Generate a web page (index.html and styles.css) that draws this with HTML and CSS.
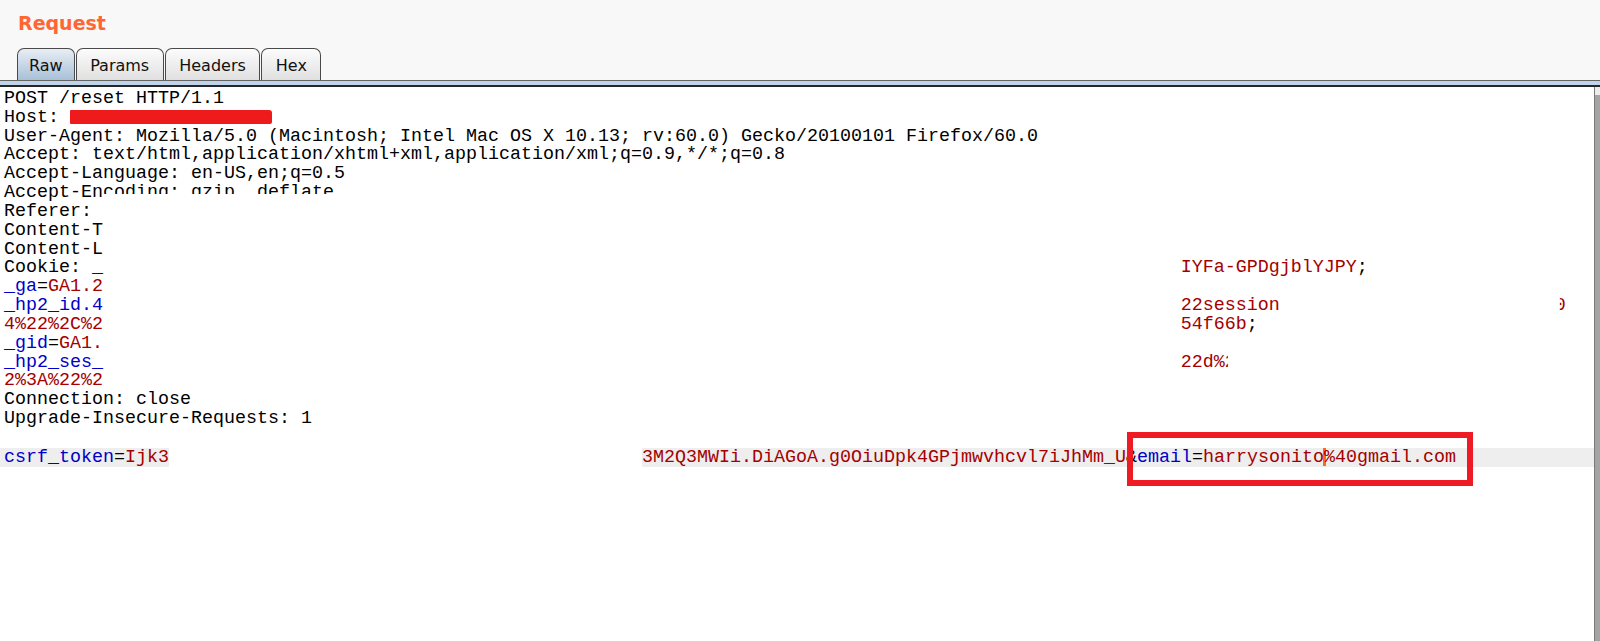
FILE: index.html
```html
<!DOCTYPE html>
<html lang="en">
<head>
<meta charset="utf-8">
<title>Request</title>
<link rel="stylesheet" href="styles.css">
</head>
<body>
<div class="top">
  <h1 class="title">Request</h1>
  <div class="tabs">
    <div class="tab active">Raw</div>
    <div class="tab">Params</div>
    <div class="tab">Headers</div>
    <div class="tab">Hex</div>
  </div>
</div>
<div class="bar"></div>
<div class="main">
  <div class="editor">
    <div class="ln">POST /reset HTTP/1.1</div>
    <div class="ln">Host: <span class="redact"></span></div>
    <div class="ln">User-Agent: Mozilla/5.0 (Macintosh; Intel Mac OS X 10.13; rv:60.0) Gecko/20100101 Firefox/60.0</div>
    <div class="ln">Accept: text/html,application/xhtml+xml,application/xml;q=0.9,*/*;q=0.8</div>
    <div class="ln">Accept-Language: en-US,en;q=0.5</div>
    <div class="ln">Accept-En<span class="cut">coding: gzip, deflate</span></div>
    <div class="ln">Referer:</div>
    <div class="ln">Content-T</div>
    <div class="ln">Content-L</div>
    <div class="ln">Cookie: <span class="k">_</span><span class="gap g98"></span><span class="v">IYFa-GPDgjblYJPY</span>;</div>
    <div class="ln"><span class="k">_ga</span>=<span class="v">GA1.2</span></div>
    <div class="ln"><span class="k">_hp2_id.4</span><span class="gap g98"></span><span class="v">22session</span><span class="gap g25"></span><span class="v clipl">0</span></div>
    <div class="ln"><span class="v">4%22%2C%2</span><span class="gap g98"></span><span class="v">54f66b</span>;</div>
    <div class="ln"><span class="k">_gid</span>=<span class="v">GA1.</span></div>
    <div class="ln"><span class="k">_hp2_ses_</span><span class="gap g98"></span><span class="v">22d%</span><span class="v clipr">2</span></div>
    <div class="ln"><span class="v">2%3A%22%2</span></div>
    <div class="ln">Connection: close</div>
    <div class="ln">Upgrade-Insecure-Requests: 1</div>
    <div class="ln"> </div>
    <div class="ln hl"><span class="k">csrf_token</span>=<span class="v">Ijk3</span><span class="gap g43 blank"></span><span class="v">3M2Q3MWIi.DiAGoA.g0OiuDpk4GPjmwvhcvl7iJhMm_U</span>&amp;<span class="k">email</span>=<span class="v">harrysonito<span class="caret"></span>%40gmail.com</span><span class="box"></span></div>
  </div>
  <div class="scroll"></div>
</div>
</body>
</html>
```
FILE: styles.css
```css
html, body {
  margin: 0;
  padding: 0;
  height: 100%;
  overflow: hidden;
  background: #ffffff;
}

.top {
  background: #f8f8f8;
  padding: 12px 0 0 17px;
}

.title {
  margin: 0 0 14px 1px;
  font-family: "DejaVu Sans", sans-serif;
  font-weight: bold;
  font-size: 19px;
  line-height: 22px;
  color: #ff6633;
}

.tabs {
  display: flex;
  gap: 1px;
  align-items: flex-end;
}

.tab {
  box-sizing: border-box;
  height: 32px;
  padding: 3px 13.5px 0;
  line-height: 28px;
  border: 1px solid #4a4a4a;
  border-bottom: none;
  border-radius: 7px 7px 0 0;
  font-family: "DejaVu Sans", sans-serif;
  font-size: 16px;
  color: #111;
  background: linear-gradient(#fcfcfc, #e0e0e0);
}

.tab.active {
  padding: 3px 11px 0;
  background: linear-gradient(#e8eef4, #a8c0d8);
}

.bar {
  height: 4px;
  border-top: 1px solid #666;
  border-bottom: 2px solid #262626;
  background: #bfd4ea;
}

.main {
  display: flex;
  height: 554px;
}

.editor {
  flex: 1;
  background: #fff;
  padding-top: 3px;
  font-family: "Liberation Mono", "Courier New", monospace;
  font-size: 18.333px;
  line-height: 18.84px;
  color: #000;
}

.ln {
  position: relative;
  white-space: pre;
  padding-left: 4px;
  height: 18.84px;
}

.ln.hl {
  background: #eeeeee;
}

.k { color: #0000c8; }
.v { color: #a40000; }

.gap { display: inline-block; height: 18px; vertical-align: top; }
.g98 { width: 98ch; }
.g25 { width: 25ch; }
.g43 { width: 43ch; }
.blank { background: #fff; height: 18.84px; }

.redact {
  display: inline-block;
  width: 202px;
  height: 14px;
  vertical-align: -2px;
  background: #ee1a1c;
  border-radius: 1px 3px 2px 1px;
}

.cut {
  display: inline-block;
  height: 10px;
  overflow: hidden;
  vertical-align: top;
}

.clipl {
  display: inline-block;
  clip-path: inset(0 0 0 5px);
}

.clipr {
  display: inline-block;
  clip-path: inset(0 8px 0 0);
}

.caret {
  display: inline-block;
  width: 3px;
  height: 18px;
  margin: 0 -2px 0 -1px;
  vertical-align: -4px;
  background: #ff6a13;
}

.box {
  position: absolute;
  left: 1127px;
  top: -16px;
  width: 334px;
  height: 42px;
  border: 6px solid #ee1b24;
}

.scroll {
  width: 5px;
  border-left: 1px solid #7a7a7a;
  background: linear-gradient(#ececec 0, #ececec 8px, #a4a4a4 8px);
}
```
